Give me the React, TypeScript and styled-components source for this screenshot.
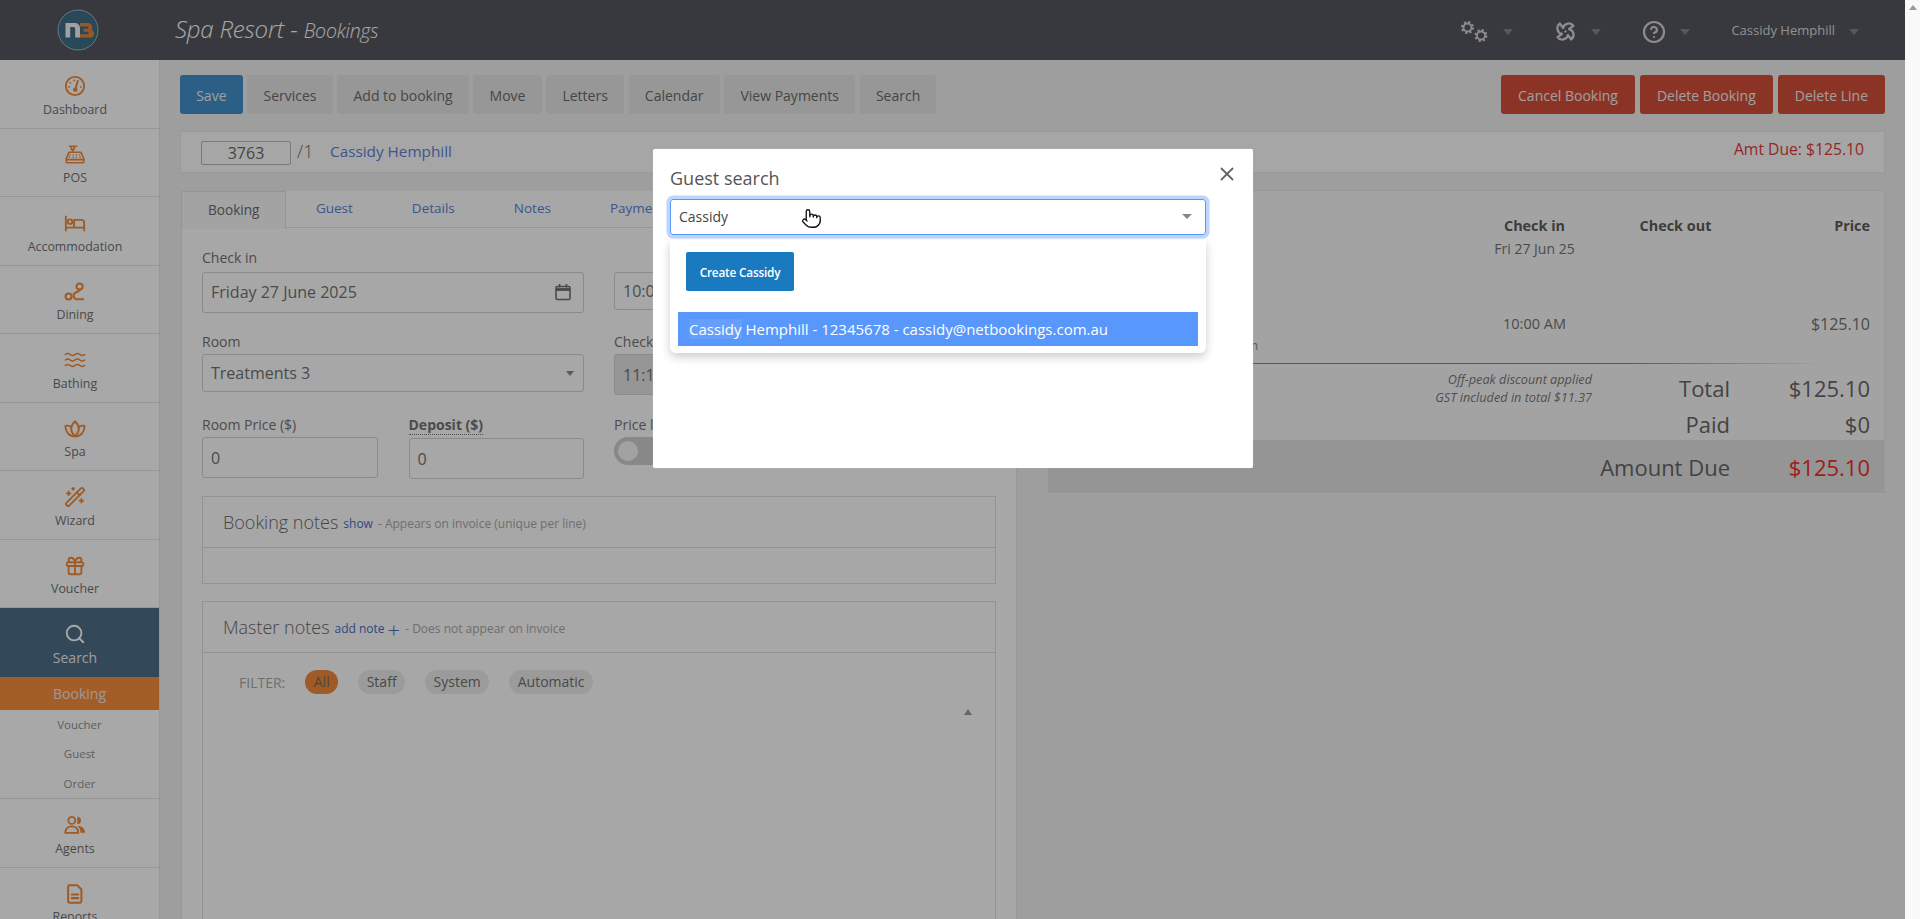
import React from "react";
import styled, { createGlobalStyle } from "styled-components";
import { Search as SearchIcon, Gift, WandSparkles, Fan, CircleHelp, X, Pointer } from "lucide-react";

const Global = createGlobalStyle`
  html, body { margin: 0; padding: 0; height: 919px; overflow: hidden; background: #fff; }
  body { font-family: "Open Sans", "Liberation Sans", sans-serif; font-size: 14px; color: #6f6f6f; }
  * { box-sizing: border-box; }
`;

const Shell = styled.div`display: flex; width: 1920px; height: 919px; overflow: hidden;`;
const Page = styled.div`position: relative; width: 1905px; height: 919px; overflow: hidden; background: #f0f0f0; display: flex; flex-direction: column;`;
const Scrollbar = styled.div`width: 15px; height: 919px; background: #f9f9f9; display: flex; justify-content: center; padding-top: 5px;`;
const ScrollArrow = styled.div`width: 0; height: 0; border-left: 4.5px solid transparent; border-right: 4.5px solid transparent; border-bottom: 5px solid #9a9a9a;`;
const Backdrop = styled.div`position: absolute; inset: 0; background: rgba(0, 0, 0, 0.34);`;

const TopBar = styled.header`height: 60px; flex: none; background: #56575f; display: flex; align-items: center; padding-right: 46px;`;
const LogoCell = styled.div`width: 156px; display: flex; justify-content: center;`;
const Title = styled.div`margin-left: 19px; font-style: italic; color: #fff; font-size: 24px; font-weight: 300; letter-spacing: -0.2px; margin-top: -3px;`;
const TitleSub = styled.span`font-size: 19.5px; letter-spacing: -0.2px;`;
const TopRight = styled.div`margin-left: auto; display: flex; align-items: center; gap: 41px; color: #d6d6d6; padding-top: 3px;`;
const TopItem = styled.div`display: flex; align-items: center; gap: 14px;`;
const TopCaret = styled.span`width: 0; height: 0; border-left: 5.5px solid transparent; border-right: 5.5px solid transparent; border-top: 6px solid #85868d;`;
const UserName = styled.span`font-size: 13px; font-weight: 500; color: #dcdcdc; margin-top: -3px;`;
const TurnedFan = styled(Fan)`transform: rotate(40deg);`;

const Body = styled.div`display: flex; flex: 1; min-height: 0;`;
const Sidebar = styled.nav`width: 160px; flex: none; background: #fff; border-right: 1px solid #e6e6e6; display: flex; flex-direction: column;`;
const NavItem = styled.div<{ $active?: boolean }>`
  height: ${(p) => (p.$active ? "69px" : "68.5px")};
  flex: none;
  padding: 15px 9px 0 0;
  display: flex;
  flex-direction: column;
  align-items: center;
  color: ${(p) => (p.$active ? "#ffffff" : "#f08a3a")};
  background: ${(p) => (p.$active ? "#4e7088" : "transparent")};
  border-bottom: ${(p) => (p.$active ? "none" : "1px solid #e4e4e4")};
  svg { width: 22px; height: 22px; display: block; }
`;
const NavLabel = styled.span<{ $active?: boolean }>`
  margin-top: ${(p) => (p.$active ? "4px" : "3.5px")}; line-height: 18px;
  font-size: ${(p) => (p.$active ? "14px" : "12.4px")};
  color: ${(p) => (p.$active ? "#eeeeee" : "#707070")};
`;
const SubItem = styled.div<{ $active?: boolean }>`
  text-align: center;
  height: ${(p) => (p.$active ? "33px" : "29.4px")};
  line-height: ${(p) => (p.$active ? "33px" : "29.4px")};
  font-size: ${(p) => (p.$active ? "14px" : "11.5px")};
  background: ${(p) => (p.$active ? "#f78d3c" : "transparent")};
  color: ${(p) => (p.$active ? "#f2e6e6" : "#909090")};
`;
const SubList = styled.div`border-bottom: 1px solid #e4e4e4; flex: none;`;

const Main = styled.main`flex: 1; min-width: 0; padding: 15px 20px 0 20px; display: flex; flex-direction: column;`;
const Toolbar = styled.div`display: flex; gap: 4.6px; height: 39px; flex: none;`;
const ToolButton = styled.div<{ $kind?: "primary" | "danger" }>`
  height: 39px; display: flex; align-items: center; border-radius: 3px; font-size: 14px;
  padding: ${(p) => (p.$kind === "danger" ? "1px 17px 0" : "1px 16.2px 0")};
  background: ${(p) => (p.$kind === "primary" ? "#4290cc" : p.$kind === "danger" ? "#d44f3a" : "#e6e6e6")};
  color: ${(p) => (p.$kind ? "#f2f2f2" : "#6a6a6a")};
`;
const ToolbarRight = styled.div`margin-left: auto; display: flex; gap: 5px;`;

const RefBar = styled.div`margin-top: 17px; height: 42px; flex: none; background: #fcfcfc; border: 1px solid #e8e8e8; display: flex; align-items: center; padding: 0 20px 2px 20px;`;
const RefInput = styled.div`width: 90px; height: 24px; border: 1px solid #b8b8b8; border-radius: 2px; text-align: center; font-size: 16px; line-height: 22px; margin-top: 3px; color: #6a6a6a;`;
const RefSuffix = styled.span`margin-left: 6px; font-size: 18px; font-weight: 300; width: 33px; color: #6a6a6a;`;
const RefName = styled.span`font-size: 15.3px; color: #5b82d6;`;
const AmtDue = styled.span`margin-left: auto; font-size: 15.7px; color: #e23b3b; margin-bottom: 5px;`;

const Columns = styled.div`margin-top: 18px; display: flex; align-items: flex-start; padding-left: 1px; gap: 31px;`;
const LeftPanel = styled.section`width: 836px; height: 900px; flex: none; background: #fdfdfd; border: 1px solid #e6e6e6; border-top: none;`;
const Tabs = styled.div`display: flex; height: 37px; border-bottom: 1px solid #e2e2e2; margin-left: -1px;`;
const Tab = styled.div<{ $active?: boolean }>`
  height: 38px; line-height: 35px; white-space: nowrap;
  font-size: ${(p) => (p.$active ? "13.6px" : "13.5px")};
  padding: ${(p) => (p.$active ? "0 26px" : "0 29.5px")};
  color: ${(p) => (p.$active ? "#6c6c6c" : "#5b82d6")};
  background: ${(p) => (p.$active ? "#f7f7f7" : "transparent")};
  border: ${(p) => (p.$active ? "1px solid #e2e2e2" : "none")};
  border-bottom: none;
`;
const FormBody = styled.div`padding: 20px 20px 0 20px;`;
const FormRow = styled.div<{ $after: number }>`display: flex; gap: 30px; margin-bottom: ${(p) => p.$after}px;`;
const Col = styled.div`width: 382px; flex: none; display: flex; flex-direction: column;`;
const SplitCol = styled.div`width: 382px; flex: none; display: flex; gap: 31px;`;
const HalfCol = styled.div`flex: 1; min-width: 0; display: flex; flex-direction: column;`;
const Label = styled.label<{ $gap?: number; $strong?: boolean }>`
  font-size: 14px; line-height: 20px; min-height: 20px; color: #737373;
  margin-bottom: ${(p) => p.$gap ?? 2}px;
  ${(p) => p.$strong && "font-weight: 700; align-self: flex-start; line-height: 19px; min-height: 19px; border-bottom: 1px dotted #777;"}
`;
const Input = styled.div<{ $h: number; $disabled?: boolean; $lift?: boolean }>`
  height: ${(p) => p.$h}px; border: 1px solid #d2d2d2; border-radius: 3px;
  padding: ${(p) => (p.$lift ? "0 8px 2px" : "0 8px")};
  display: flex; align-items: center; justify-content: space-between;
  font-size: 16px; color: #737373; white-space: nowrap;
  background: ${(p) => (p.$disabled ? "#e4e4e4" : "transparent")};
`;
const InputIcon = styled.span`display: flex; margin-right: 3px;`;
const SelectCaret = styled.span`width: 0; height: 0; border-left: 4px solid transparent; border-right: 4px solid transparent; border-top: 5px solid #8a8a8a; margin-right: 1px;`;
const Toggle = styled.div`width: 60px; height: 28px; border-radius: 14px; background: #cfcfcf; padding: 4px;`;
const Knob = styled.div`width: 20px; height: 20px; border-radius: 50%; background: #f6f6f6;`;

const NotePanel = styled.div<{ $h: number }>`height: ${(p) => p.$h}px; width: 794px; border: 1px solid #e0e0e0; margin-bottom: 17px;`;
const NoteHead = styled.div`height: 51px; border-bottom: 1px solid #e0e0e0; padding-left: 20px; display: flex; align-items: center; gap: 5px; white-space: nowrap;`;
const NoteTitle = styled.span`font-size: 18px; font-weight: 300; color: #6a6a6a;`;
const NoteLink = styled.span`font-size: 12px; color: #4a6fc4; margin-top: 3px; display: flex; align-items: center; gap: 3px;`;
const NoteHint = styled.span`font-size: 12px; color: #a8a8a8; margin-top: 3px;`;
const Plus = styled.span`font-size: 22px; line-height: 12px; font-weight: 300;`;
const FilterRow = styled.div`padding: 17px 0 0 36px; display: flex; align-items: center; gap: 20px;`;
const FilterLabel = styled.span`font-size: 14px; color: #a8a8a8;`;
const Pill = styled.span<{ $active?: boolean }>`
  height: 24px; line-height: 24px; padding: 0 8.5px; border-radius: 12px; font-size: 14px;
  background: ${(p) => (p.$active ? "#f2893a" : "#ececec")};
  color: ${(p) => (p.$active ? "#7a6a5a" : "#707070")};
`;
const FilterCaretRow = styled.div`display: flex; justify-content: flex-end; padding: 15px 23px 0 0;`;
const UpCaret = styled.span`width: 0; height: 0; border-left: 4.5px solid transparent; border-right: 4.5px solid transparent; border-bottom: 6px solid #9a9a9a;`;

const RightPanel = styled.section`width: 837px; height: 304px; flex: none; margin-top: -1px; background: #f8f8f8; border: 1px solid #e6e6e6; border-bottom: none; display: flex; flex-direction: column;`;
const LineTable = styled.div`padding: 25px 14px 0 15px; display: grid; grid-template-columns: 400px 141px 141px 124px; grid-template-rows: 22px 22px 53px 22px 22px; font-size: 14px; color: #737373;`;
const HeadCell = styled.div<{ $align?: string }>`font-weight: 700; color: #5c5c5c; font-size: 14.4px; text-align: ${(p) => p.$align ?? "center"};`;
const Cell = styled.div<{ $align?: string; $size?: number }>`text-align: ${(p) => p.$align ?? "center"}; font-size: ${(p) => p.$size ?? 14}px; white-space: nowrap; line-height: 22px;`;
const Spacer = styled.div`grid-column: 1 / -1;`;
const DescCell = styled.div`width: 194px; text-align: right; white-space: nowrap; font-size: 12px; line-height: 22px; color: #8a8a8a; grid-column: 1;`;
const Rule = styled.div`height: 1px; margin: 6px 15px 0 15px; background: linear-gradient(to right, #888 0%, #888 70%, transparent 95%);`;
const Totals = styled.div`padding: 6px 14px 0 15px; display: grid; grid-template-columns: 1fr 138px 140px; grid-template-rows: 36px 34px; flex: none;`;
const TotalNotes = styled.div`grid-row: 1 / 3; text-align: right; font-style: italic; font-size: 12.7px; line-height: 18px; color: #787878;`;
const TotalLabel = styled.div`text-align: right; font-size: 22px; line-height: 36px; color: #666; font-weight: 400;`;
const TotalValue = styled.div`text-align: right; font-size: 22px; line-height: 36px; color: #666;`;
const DueBar = styled.div`height: 53px; flex: none; background: #e2e2e2; padding: 0 14px 0 15px; display: grid; grid-template-columns: 1fr 140px; align-items: center;`;
const DueValue = styled(TotalValue)`color: #ee2f2f;`;

const Modal = styled.div`position: absolute; left: 653px; top: 149px; width: 600px; height: 319px; background: #fff; border-radius: 2px; padding: 17px 17px; box-shadow: 0 0 1px rgba(255,255,255,.6);`;
const ModalTitle = styled.h4`margin: 0 0 8px 0; font-size: 18px; font-weight: 400; line-height: 25px; color: #555;`;
const Close = styled.div`position: absolute; left: 563px; top: 14px; color: #666; display: flex;`;
const SelectWrap = styled.div`position: relative; width: 536px;`;
const SelectBox = styled.div`height: 36px; border: 1px solid #5897fb; border-radius: 3px; box-shadow: 0 0 0 3.5px #bcd6fd; padding: 0 10px 2px 8px; display: flex; align-items: center; justify-content: space-between; font-size: 14px; color: #444;`;
const BoxCaret = styled.span`width: 0; height: 0; border-left: 5px solid transparent; border-right: 5px solid transparent; border-top: 5.5px solid #888; margin-right: 3px;`;
const Dropdown = styled.div`position: absolute; left: 0; top: 41px; width: 536px; height: 113px; background: #fff; border-radius: 0 0 6px 6px; box-shadow: 0 4px 10px rgba(0, 0, 0, 0.2); padding: 12px 8px 0 8px;`;
const CreateButton = styled.div`margin-left: 8px; width: 108px; height: 39px; border-radius: 2px; background: #1a7abf; color: #fff; font-size: 11.8px; font-weight: 600; display: flex; align-items: center; justify-content: center; white-space: nowrap; letter-spacing: -0.2px;`;
const Option = styled.div`margin-top: 21px; height: 34px; background: #5897fb; color: #fff; padding: 0 11px; display: flex; align-items: center; font-size: 15px; font-weight: 500; white-space: nowrap;`;
const Match = styled.span`background: rgba(255, 255, 255, 0.08);`;
const HandCursor = styled.div`position: absolute; left: 131px; top: 9px; display: flex; color: #111;`;

const strokeProps = { fill: "none", stroke: "currentColor", strokeWidth: 2, strokeLinecap: "round" as const, strokeLinejoin: "round" as const };

const Logo = () => (
  <svg width="42" height="42" viewBox="0 0 42 42">
    <circle cx="21" cy="21" r="20" fill="#3f6f88" stroke="#9db6c4" strokeWidth="1" />
    <path d="M8.5 28.5V14h9.5a5 5 0 0 1 5 5v9.500h-4.800v-9a1.500 1.500 0 0 0-1.500-1.500h-3.500v10.500z" fill="#f4f4f4" />
    <path d="M23 14h8a4.300 4.300 0 0 1 3.400 7 4 4 0 0 1-2.900 7.500H23v-3.200h7.500a1.200 1.200 0 0 0 0-2.600H26.500v-3h3.800a1.100 1.100 0 0 0 0-2.200H23z" fill="#e8843a" />
  </svg>
);
const GaugeIcon = () => (
  <svg viewBox="0 0 24 24" {...strokeProps}>
    <circle cx="12" cy="12" r="10" />
    <path d="M12.5 15.5 15 6.5" strokeWidth="2.2" />
    <circle cx="12.3" cy="16" r="1.5" fill="currentColor" />
    <path d="M5.5 13v.01M7 8.5v.01M11 6v.01M18.5 13v.01" strokeWidth="2" />
  </svg>
);
const RegisterIcon = () => (
  <svg viewBox="0 0 24 24" {...strokeProps} strokeWidth={1.8}>
    <path d="M6 2.5h8M8 2.5V6h3V2.5M9.5 6v3" />
    <path d="M5.5 9h13l3 7v3.5a1 1 0 0 1-1 1h-17a1 1 0 0 1-1-1V16z" />
    <path d="M2.5 17h19M6.5 12h.01M10 12h.01M13.5 12h.01M17 12h.01M6 14.5h.01M10 14.5h.01M13.5 14.5h.01M17.5 14.5h.01" />
  </svg>
);
const BedIcon = () => (
  <svg viewBox="0 0 24 24" {...strokeProps} strokeLinecap="butt">
    <path d="M2 4v17M2 17h20M22 21v-9.5a3 3 0 0 0-3-3h-8V17" />
    <circle cx="6.5" cy="10.5" r="2.5" />
  </svg>
);
const DiningIcon = () => (
  <svg viewBox="0 0 24 24" {...strokeProps} strokeWidth={2.2}>
    <circle cx="5" cy="17" r="3.3" />
    <circle cx="17" cy="6" r="3.4" />
    <path d="M17 9.5c0 3-6 2-6.5 5.5-.3 3 1.5 5 4 5h6.5" />
  </svg>
);
const WavesIcon = () => (
  <svg viewBox="0 0 24 24" {...strokeProps} strokeWidth={1.7}>
    <path d="M1.5 6c2-1.700 3.300-1.700 5.250 0s3.300 1.700 5.250 0 3.300-1.700 5.250 0 3.300 1.700 5.250 0" />
    <path d="M1.5 12c2-1.700 3.300-1.700 5.250 0s3.300 1.700 5.250 0 3.300-1.700 5.250 0 3.300 1.700 5.250 0" />
    <path d="M1.5 18c2-1.700 3.300-1.700 5.250 0s3.300 1.700 5.250 0 3.300-1.700 5.250 0 3.300 1.700 5.250 0" />
  </svg>
);
const LotusIcon = () => (
  <svg viewBox="0 0 24 24" {...strokeProps}>
    <path d="M12 3.5c2.800 2.600 4.200 5.300 4.200 8.300 0 3.500-2 6-4.200 8.200-2.200-2.200-4.200-4.700-4.200-8.200 0-3 1.400-5.700 4.200-8.300z" />
    <path d="M7.900 9.600C5.800 8.400 3.700 8 1.500 8.500 1.500 15 5.500 20 12 20s10.500-5 10.500-11.500c-2.200-.5-4.300-.1-6.400 1.100" />
  </svg>
);
const AgentsIcon = () => (
  <svg viewBox="0 0 24 24" fill="none" stroke="currentColor" strokeWidth="2">
    <circle cx="8.5" cy="7" r="3.8" />
    <path d="M1.5 20.5c0-4.500 3-7 7-7s7 2.500 7 7z" />
    <path d="M14.5 3a4 4 0 0 1 0 8z" fill="currentColor" stroke="none" />
    <path d="M15 13c4.500 0 8 2.800 8 7.500h-5c0-3-1-5.500-3-7.500z" fill="currentColor" stroke="none" />
  </svg>
);
const ReportIcon = () => (
  <svg viewBox="0 0 24 24" {...strokeProps} strokeWidth={2.2}>
    <path d="M6 2.5h8.500l4.500 4.500v13a1.500 1.500 0 0 1-1.500 1.500H6A1.500 1.500 0 0 1 4.500 20V4A1.500 1.500 0 0 1 6 2.500z" />
    <path d="M8.5 12.5h7M8.5 16.5h7" />
  </svg>
);
const GearsIcon = () => (
  <svg width="29" height="23" viewBox="0 0 29 23" fill="none" stroke="currentColor">
    <circle cx="7.5" cy="7.5" r="4" strokeWidth="1.8" />
    <circle cx="7.5" cy="7.5" r="5.5" strokeWidth="2" strokeDasharray="2.16 2.16" />
    <circle cx="21" cy="15.5" r="4" strokeWidth="1.8" />
    <circle cx="21" cy="15.5" r="5.5" strokeWidth="2" strokeDasharray="2.16 2.16" />
  </svg>
);
const CalendarIcon = () => (
  <svg width="18" height="18" viewBox="0 0 18 18" fill="none" stroke="#6f6f6f" strokeWidth="1.6">
    <rect x="2" y="3.5" width="14" height="13" rx="1.5" />
    <path d="M2 6.5h14" strokeWidth="2.8" />
    <path d="M5.5 1v3.5M12.5 1v3.5" />
  </svg>
);

type NavEntry = { label: string; icon: React.ReactNode };
const navTop: NavEntry[] = [
  { label: "Dashboard", icon: <GaugeIcon /> },
  { label: "POS", icon: <RegisterIcon /> },
  { label: "Accommodation", icon: <BedIcon /> },
  { label: "Dining", icon: <DiningIcon /> },
  { label: "Bathing", icon: <WavesIcon /> },
  { label: "Spa", icon: <LotusIcon /> },
  { label: "Wizard", icon: <WandSparkles strokeWidth={2} /> },
  { label: "Voucher", icon: <Gift strokeWidth={2} /> },
];
const navBottom: NavEntry[] = [
  { label: "Agents", icon: <AgentsIcon /> },
  { label: "Reports", icon: <ReportIcon /> },
];
const tools = ["Services", "Add to booking", "Move", "Letters", "Calendar", "View Payments", "Search"];
const tabs = ["Guest", "Details", "Notes", "Payments", "Extras"];
const filters = ["Staff", "System", "Automatic"];

export default function App() {
  return (
    <Shell>
      <Global />
      <Page>
        <TopBar>
          <LogoCell><Logo /></LogoCell>
          <Title>Spa Resort - <TitleSub>Bookings</TitleSub></Title>
          <TopRight>
            <TopItem><GearsIcon /><TopCaret /></TopItem>
            <TopItem><TurnedFan size={23} strokeWidth={2.4} /><TopCaret /></TopItem>
            <TopItem><CircleHelp size={24} strokeWidth={2.2} /><TopCaret /></TopItem>
            <TopItem><UserName>Cassidy Hemphill</UserName><TopCaret /></TopItem>
          </TopRight>
        </TopBar>
        <Body>
          <Sidebar>
            {navTop.map((n) => (
              <NavItem key={n.label}>{n.icon}<NavLabel>{n.label}</NavLabel></NavItem>
            ))}
            <NavItem $active><SearchIcon strokeWidth={2} /><NavLabel $active>Search</NavLabel></NavItem>
            <SubList>
              <SubItem $active>Booking</SubItem>
              <SubItem>Voucher</SubItem>
              <SubItem>Guest</SubItem>
              <SubItem>Order</SubItem>
            </SubList>
            {navBottom.map((n) => (
              <NavItem key={n.label}>{n.icon}<NavLabel>{n.label}</NavLabel></NavItem>
            ))}
          </Sidebar>
          <Main>
            <Toolbar>
              <ToolButton $kind="primary">Save</ToolButton>
              {tools.map((t) => <ToolButton key={t}>{t}</ToolButton>)}
              <ToolbarRight>
                <ToolButton $kind="danger">Cancel Booking</ToolButton>
                <ToolButton $kind="danger">Delete Booking</ToolButton>
                <ToolButton $kind="danger">Delete Line</ToolButton>
              </ToolbarRight>
            </Toolbar>
            <RefBar>
              <RefInput>3763</RefInput>
              <RefSuffix>/1</RefSuffix>
              <RefName>Cassidy Hemphill</RefName>
              <AmtDue>Amt Due: $125.10</AmtDue>
            </RefBar>
            <Columns>
              <LeftPanel>
                <Tabs>
                  <Tab $active>Booking</Tab>
                  {tabs.map((t) => <Tab key={t}>{t}</Tab>)}
                </Tabs>
                <FormBody>
                  <FormRow $after={19}>
                    <Col>
                      <Label $gap={4}>Check in</Label>
                      <Input $h={41} $lift>Friday 27 June 2025<InputIcon><CalendarIcon /></InputIcon></Input>
                    </Col>
                    <Col>
                      <Label $gap={4} />
                      <Input $h={38}>10:00 AM</Input>
                    </Col>
                  </FormRow>
                  <FormRow $after={20}>
                    <Col>
                      <Label>Room</Label>
                      <Input $h={38}>Treatments 3<SelectCaret /></Input>
                    </Col>
                    <Col>
                      <Label>Check out</Label>
                      <Input $h={41} $disabled>11:15 AM</Input>
                    </Col>
                  </FormRow>
                  <FormRow $after={17}>
                    <SplitCol>
                      <HalfCol>
                        <Label>Room Price ($)</Label>
                        <Input $h={41}>0</Input>
                      </HalfCol>
                      <HalfCol>
                        <Label $strong $gap={3}>Deposit ($)</Label>
                        <Input $h={41}>0</Input>
                      </HalfCol>
                    </SplitCol>
                    <Col>
                      <Label>Price lock</Label>
                      <Toggle><Knob /></Toggle>
                    </Col>
                  </FormRow>
                  <NotePanel $h={88}>
                    <NoteHead>
                      <NoteTitle>Booking notes</NoteTitle>
                      <NoteLink>show</NoteLink>
                      <NoteHint>- Appears on invoice (unique per line)</NoteHint>
                    </NoteHead>
                  </NotePanel>
                  <NotePanel $h={400}>
                    <NoteHead>
                      <NoteTitle>Master notes</NoteTitle>
                      <NoteLink>add note <Plus>+</Plus></NoteLink>
                      <NoteHint>- Does not appear on invoice</NoteHint>
                    </NoteHead>
                    <FilterRow>
                      <FilterLabel>FILTER:</FilterLabel>
                      <Pill $active>All</Pill>
                      {filters.map((f) => <Pill key={f}>{f}</Pill>)}
                    </FilterRow>
                    <FilterCaretRow><UpCaret /></FilterCaretRow>
                  </NotePanel>
                </FormBody>
              </LeftPanel>
              <RightPanel>
                <LineTable>
                  <div />
                  <HeadCell>Check in</HeadCell>
                  <HeadCell>Check out</HeadCell>
                  <HeadCell $align="right">Price</HeadCell>
                  <div />
                  <Cell>Fri 27 Jun 25</Cell>
                  <div />
                  <div />
                  <Spacer />
                  <div />
                  <Cell $size={14.5}>10:00 AM</Cell>
                  <div />
                  <Cell $align="right" $size={16}>$125.10</Cell>
                  <DescCell>Treatments 3 - 75 min</DescCell>
                </LineTable>
                <Rule />
                <Totals>
                  <TotalNotes>Off-peak discount applied<br />GST included in total $11.37</TotalNotes>
                  <TotalLabel>Total</TotalLabel>
                  <TotalValue>$125.10</TotalValue>
                  <TotalLabel>Paid</TotalLabel>
                  <TotalValue>$0</TotalValue>
                </Totals>
                <DueBar>
                  <TotalLabel>Amount Due</TotalLabel>
                  <DueValue>$125.10</DueValue>
                </DueBar>
              </RightPanel>
            </Columns>
          </Main>
        </Body>
        <Backdrop />
        <Modal>
          <Close><X size={22} strokeWidth={2} /></Close>
          <ModalTitle>Guest search</ModalTitle>
          <SelectWrap>
            <SelectBox>Cassidy<BoxCaret /></SelectBox>
            <HandCursor><Pointer size={21} strokeWidth={1.5} fill="#fff" /></HandCursor>
            <Dropdown>
              <CreateButton>Create Cassidy</CreateButton>
              <Option><Match>Cassidy</Match>&nbsp;Hemphill - 12345678 - cassidy@netbookings.com.au</Option>
            </Dropdown>
          </SelectWrap>
        </Modal>
      </Page>
      <Scrollbar><ScrollArrow /></Scrollbar>
    </Shell>
  );
}
